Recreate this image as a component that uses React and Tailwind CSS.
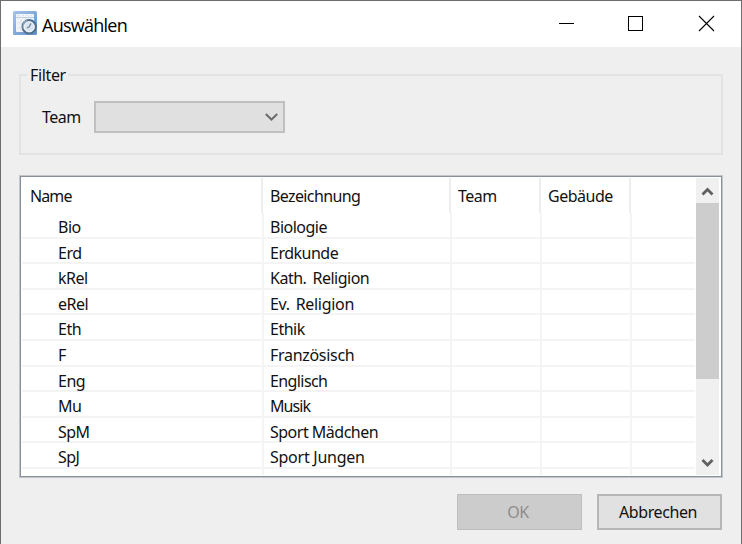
const rows = [
  ["Bio", "Biologie", ""],
  ["Erd", "Erdkunde", ""],
  ["kRel", "Kath. Religion", "[word-spacing:2.5px]"],
  ["eRel", "Ev. Religion", "[word-spacing:2px] tracking-[-0.3px]"],
  ["Eth", "Ethik", ""],
  ["F", "Französisch", "tracking-[-0.3px]"],
  ["Eng", "Englisch", "tracking-[-0.6px]"],
  ["Mu", "Musik", "tracking-[-0.9px]"],
  ["SpM", "Sport Mädchen", ""],
  ["SpJ", "Sport Jungen", "tracking-[-0.25px]"],
];

function AppIcon() {
  return (
    <svg className="ml-3 mt-[10px] h-6 w-6 shrink-0" viewBox="0 0 24 24">
      <defs>
        <linearGradient id="tile" x1="0" y1="0" x2="1" y2="1">
          <stop offset="0" stopColor="#a6c5e8" />
          <stop offset="1" stopColor="#5f90cb" />
        </linearGradient>
      </defs>
      <rect width="24" height="24" rx="1.5" fill="url(#tile)" />
      <rect x="3" y="3" width="18" height="18" rx="1" fill="#f1f4f8" />
      <path d="M3 6.5h18" stroke="#bccfe5" />
      <path d="M5 4.7h2M9 4.7h2M13 4.7h2M17 4.7h2" stroke="#dce3eb" />
      <path d="M4 12h6M4 17h5M8 8v12M13 7v3" stroke="#dfe5ec" />
      <circle cx="16.2" cy="15.8" r="6.6" fill="#d9e4ef" stroke="#54708f" strokeWidth="2.2" />
      <path d="M10.6 18a6.6 6.6 0 0 1 3.5-8.4" fill="none" stroke="#8fabc9" strokeWidth="1.6" />
      <circle cx="16.2" cy="15.8" r="5" fill="none" stroke="#f4f8fb" strokeWidth="1" />
      <path d="M18 12.4l-2 3.6-2 1" fill="none" stroke="#71859b" strokeWidth="1.2" />
    </svg>
  );
}

function TitleBar() {
  return (
    <header className="flex h-[46px] shrink-0 bg-white">
      <AppIcon />
      <h1 className="ml-[5px] mt-[11px] flex-1 font-['Open_Sans','Noto_Sans',sans-serif] text-[18px] leading-[26px] tracking-[-0.75px] text-black">
        Auswählen
      </h1>
      <svg className="h-[46px] w-[200px]" viewBox="0 0 200 46" fill="none" stroke="#000" shapeRendering="crispEdges">
        <path d="M18 22.5h15" />
        <rect x="87.5" y="15.5" width="14" height="14" />
        <path d="M158 15l15 15M173 15l-15 15" shapeRendering="auto" strokeWidth="1.1" />
      </svg>
    </header>
  );
}

function Filter() {
  return (
    <section className="relative mx-[18px] mt-[27px] flex h-[81px] w-[704px] shrink-0 border-2 border-[#e3e3e3] pl-[21px] pt-[25px]">
      <h2 className="absolute -top-[12px] left-[6px] bg-[#efefef] pl-[3px] pr-[2px] leading-[22px] tracking-[-0.35px]">Filter</h2>
      <span className="w-[52px] pt-[5px] leading-[22px]">Team</span>
      <div className="flex h-8 w-[191px] justify-end border-2 border-[#c0c0c0] bg-[#e0e0e0]">
        <svg className="mr-[5px] mt-[9px] h-[10px] w-[13px]" viewBox="0 0 13 10" fill="none" stroke="#6c6c6c" strokeWidth="2">
          <path d="M.8 2l5.7 5.5L12.2 2" />
        </svg>
      </div>
    </section>
  );
}

function Table() {
  return (
    <section className="ml-[18px] mt-5 h-[303px] w-[704px] shrink-0 border border-[#c2c6ca]">
      <div className="flex h-full border border-[#8a919c] bg-white p-px">
        <div className="w-[674px] shrink-0 overflow-hidden">
          <div className="grid h-[35px] grid-cols-[241px_188px_90px_90px_1fr] leading-[22px]">
            <div className="border-r-2 border-[#ededed] pl-2 pt-[7px] tracking-[-0.9px]">Name</div>
            <div className="border-r-2 border-[#ededed] pl-[7px] pt-[7px] tracking-[-0.62px]">Bezeichnung</div>
            <div className="border-r-2 border-[#ededed] pl-[7px] pt-[7px]">Team</div>
            <div className="border-r-2 border-[#ededed] pl-[7px] pt-[7px]">Gebäude</div>
          </div>
          {[...rows, ["", "", ""]].map(([name, label, spacing], i) => (
            <div
              key={i}
              className="grid h-[25.6px] w-[673px] grid-cols-[242px_188px_90px_90px_1fr] border-b-2 border-[#f4f4f4] leading-[22px] last:h-[7px] last:border-b-0"
            >
              <div className="border-r-2 border-[#f4f4f4] pl-[36px] pt-[3px]">{name}</div>
              <div className={`border-r-2 border-[#f4f4f4] pl-[6px] pt-[3px] ${spacing}`}>{label}</div>
              <div className="border-r-2 border-[#f4f4f4]" />
              <div className="border-r-2 border-[#f4f4f4]" />
            </div>
          ))}
        </div>
        <div className="flex w-[23px] flex-col bg-[#f0f0f0]">
          <svg className="h-[25px] w-[23px] shrink-0" viewBox="0 0 23 25" fill="none" stroke="#606060" strokeWidth="2.8">
            <path d="M6.5 16.5l5-5 5 5" />
          </svg>
          <div className="h-[176px] bg-[#cdcdcd]" />
          <svg className="mt-auto h-[25px] w-[23px]" viewBox="0 0 23 25" fill="none" stroke="#606060" strokeWidth="2.8">
            <path d="M6.5 10l5 5 5-5" />
          </svg>
        </div>
      </div>
    </section>
  );
}

export default function App() {
  return (
    <main className="flex h-[544px] w-[742px] flex-col overflow-hidden border border-b-0 border-[#6e6e6e] bg-[#efefef] font-['Noto_Sans',sans-serif] text-[16px] tracking-[-0.5px] text-[#111]">
      <TitleBar />
      <Filter />
      <Table />
      <footer className="mt-4 flex justify-end gap-[15px] pr-[19px]">
        <button disabled className="h-9 w-[125px] border border-[#bfbfbf] bg-[#cccccc] pr-[3px] text-[#8c8c8c]">
          OK
        </button>
        <button className="h-9 w-[125px] border-2 border-[#b6b6b6] bg-[#e1e1e1] pr-[3px] tracking-[-0.4px]">Abbrechen</button>
      </footer>
    </main>
  );
}
